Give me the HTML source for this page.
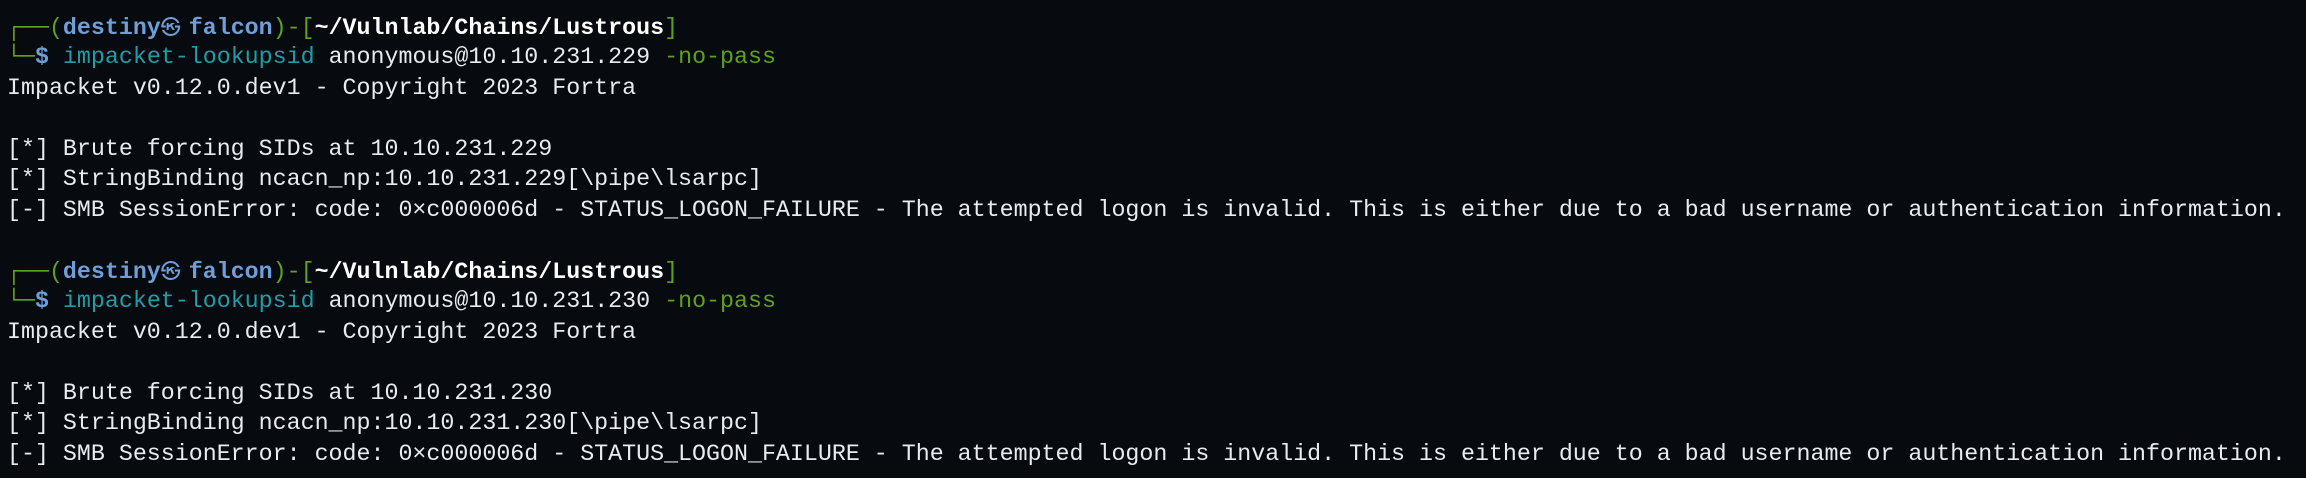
<!DOCTYPE html>
<html><head><meta charset="utf-8"><style>
html,body{margin:0;padding:0;width:2306px;height:478px;overflow:hidden;background:#070a0e;}
.r{position:absolute;left:7px;height:30px;line-height:30px;font-family:"Liberation Mono","DejaVu Sans Mono",monospace;font-size:23.3px;color:#e8ecef;white-space:pre;}
.g{color:#5ea21c}.b{color:#6f9fd8;font-weight:bold}.w{color:#ffffff;font-weight:bold}.c{color:#1f9ea8}
.k{display:inline-block;width:27.96px;text-align:left;font-weight:normal;font-family:"DejaVu Sans",sans-serif;font-size:20px}
</style></head><body>
<div class="r" style="top:12px"><span class="g">┌──(</span><span class="b">destiny<span class="k">㉿</span>falcon</span><span class="g">)-[</span><span class="w">~/Vulnlab/Chains/Lustrous</span><span class="g">]</span></div>
<div class="r" style="top:42px"><span class="g">└─</span><span class="b">$</span> <span class="c">impacket-lookupsid</span> anonymous@10.10.231.229 <span class="g">-no-pass</span></div>
<div class="r" style="top:73px">Impacket v0.12.0.dev1 - Copyright 2023 Fortra</div>
<div class="r" style="top:134px">[*] Brute forcing SIDs at 10.10.231.229</div>
<div class="r" style="top:164px">[*] StringBinding ncacn_np:10.10.231.229[\pipe\lsarpc]</div>
<div class="r" style="top:195px">[-] SMB SessionError: code: 0×c000006d - STATUS_LOGON_FAILURE - The attempted logon is invalid. This is either due to a bad username or authentication information.</div>
<div class="r" style="top:256px"><span class="g">┌──(</span><span class="b">destiny<span class="k">㉿</span>falcon</span><span class="g">)-[</span><span class="w">~/Vulnlab/Chains/Lustrous</span><span class="g">]</span></div>
<div class="r" style="top:286px"><span class="g">└─</span><span class="b">$</span> <span class="c">impacket-lookupsid</span> anonymous@10.10.231.230 <span class="g">-no-pass</span></div>
<div class="r" style="top:317px">Impacket v0.12.0.dev1 - Copyright 2023 Fortra</div>
<div class="r" style="top:378px">[*] Brute forcing SIDs at 10.10.231.230</div>
<div class="r" style="top:408px">[*] StringBinding ncacn_np:10.10.231.230[\pipe\lsarpc]</div>
<div class="r" style="top:439px">[-] SMB SessionError: code: 0×c000006d - STATUS_LOGON_FAILURE - The attempted logon is invalid. This is either due to a bad username or authentication information.</div>
</body></html>
